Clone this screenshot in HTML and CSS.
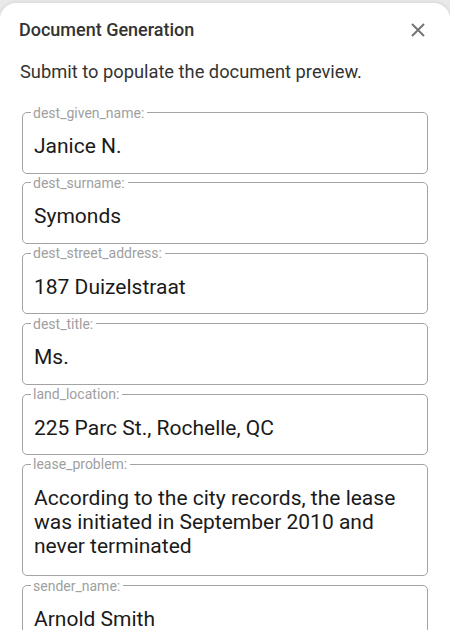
FILE: index.html
```html
<!DOCTYPE html>
<html lang="en">
<head>
<meta charset="utf-8">
<title>Document Generation</title>
<link rel="stylesheet" href="styles.css">
</head>
<body>
<div class="dialog">
  <div class="header">
    <h2 class="title">Document Generation</h2>
    <button class="close" aria-label="Close">
      <svg width="14" height="14" viewBox="0 0 14 14"><path d="M1 1L13 13M13 1L1 13" stroke="#757575" stroke-width="2" fill="none"/></svg>
    </button>
  </div>
  <p class="intro">Submit to populate the document preview.</p>
  <form class="fields">
    <fieldset class="field"><legend>dest_given_name:</legend><div class="value">Janice N.</div></fieldset>
    <fieldset class="field"><legend>dest_surname:</legend><div class="value">Symonds</div></fieldset>
    <fieldset class="field"><legend>dest_street_address:</legend><div class="value">187 Duizelstraat</div></fieldset>
    <fieldset class="field"><legend>dest_title:</legend><div class="value">Ms.</div></fieldset>
    <fieldset class="field"><legend>land_location:</legend><div class="value">225 Parc St., Rochelle, QC</div></fieldset>
    <fieldset class="field"><legend>lease_problem:</legend><div class="value multi">According to the city records, the lease was initiated in September 2010 and never terminated</div></fieldset>
    <fieldset class="field"><legend>sender_name:</legend><div class="value">Arnold Smith</div></fieldset>
  </form>
</div>
</body>
</html>
```

FILE: styles.css
```css
html, body {
  margin: 0;
  padding: 0;
  height: 100%;
  overflow: hidden;
}
body {
  background: #e9e9e9;
  font-family: Roboto, "Noto Sans", sans-serif;
}
.dialog {
  margin-top: 3px;
  background: #fff;
  border-radius: 16px 16px 0 0;
  box-shadow: 0 0 4px rgba(0,0,0,0.12);
  min-height: 640px;
}
.header {
  display: flex;
  align-items: center;
  justify-content: space-between;
  padding: 15px 25px 0 19px;
  height: 24px;
}
.title {
  margin: 0;
  font-size: 18px;
  font-weight: 500;
  color: #333;
  line-height: 24px;
}
.close {
  border: 0;
  background: none;
  padding: 0;
  width: 14px;
  height: 14px;
  display: flex;
}
.intro {
  margin: 18px 0 0 20px;
  font-size: 18.3px;
  line-height: 24px;
  color: #333;
}
.fields {
  display: flex;
  flex-direction: column;
  gap: 1.4px;
  margin: 20.5px 22px 0 22px;
}
.field {
  margin: 0;
  padding: 0 0 0 8px;
  border: 1px solid #a3a3a3;
  border-radius: 5px;
  min-inline-size: auto;
}
.field legend {
  margin: 0;
  padding: 0 3px 0 2px;
  font-size: 14px;
  line-height: 16px;
  color: #a0a0a0;
}
.value {
  padding: 13.5px 11px 14.5px 3px;
  font-size: 21px;
  line-height: 24px;
  color: #1a1a1a;
}
.value.multi {
  padding-bottom: 17.5px;
}
```
